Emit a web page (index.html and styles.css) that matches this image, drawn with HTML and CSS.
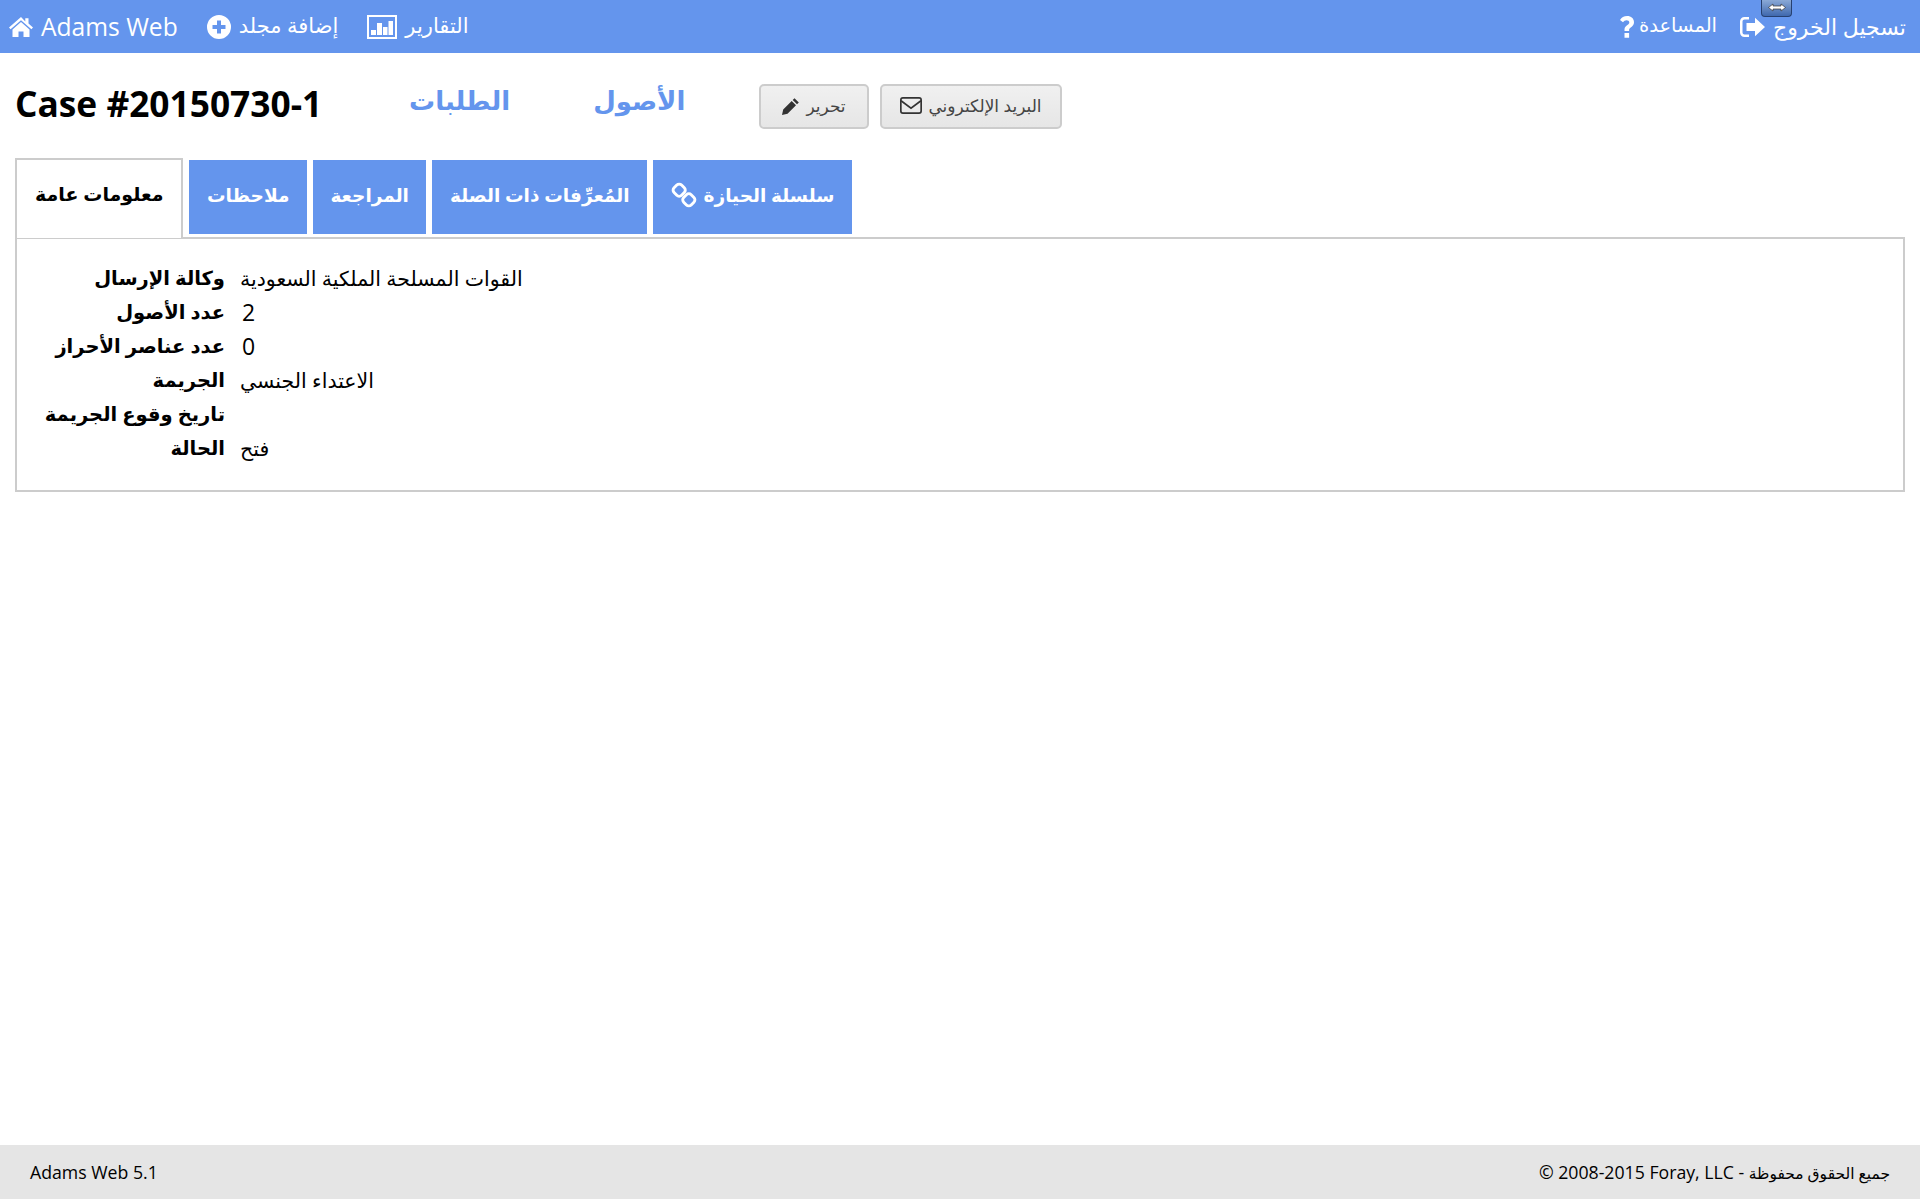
FILE: index.html
```html
<!DOCTYPE html>
<html lang="ar">
<head>
<meta charset="utf-8">
<title>Adams Web</title>
<link rel="stylesheet" href="styles.css">
</head>
<body>
<header class="topbar">
  <nav class="nav-left">
    <a class="nav-item brand"><svg class="ico ico-home" viewBox="0 0 26 22"><path d="M13 1 1 11.500l1.600 1.800L13 4.200l10.400 9.100 1.600-1.800-4.500-3.900V2.200h-3.200v3.200z"/><path d="M13 6 4.500 13.400V21h6v-5.600h5V21h6v-7.600z"/></svg><span>Adams Web</span></a>
    <a class="nav-item"><svg class="ico ico-plus" viewBox="0 0 24 24"><path fill-rule="evenodd" d="M12 0a12 12 0 1 0 0 24 12 12 0 0 0 0-24zM10 5.500h4V10h4.500v4H14v4.500h-4V14H5.500v-4H10z"/></svg><span class="nav-ar" dir="rtl">إضافة مجلد</span></a>
    <a class="nav-item"><svg class="ico ico-chart" viewBox="0 0 30 24"><path fill-rule="evenodd" d="M0 0h30v24H0zM2 2v20h26V2z"/><path d="M4 15h5v5H4zM10 8h5v12h-5zM16 12h4.500v8H16zM21.500 6H26v14h-4.500z"/></svg><span class="nav-ar" dir="rtl">التقارير</span></a>
  </nav>
  <nav class="nav-right">
    <a class="nav-item nav-help"><svg class="ico ico-q" viewBox="0 0 14 22"><path d="M4.500 15h4.600v-1.200c0-1 .5-1.500 1.700-2.400C12.500 10.100 14 8.800 14 6.200 14 2.400 11 0 7.200 0 3.900 0 1.500 1.500 0 4l3 2.300c.9-1.200 2-2 3.600-2 1.500 0 2.700.8 2.700 2.100 0 1.100-.7 1.700-1.900 2.500-1.800 1.200-2.900 2.300-2.900 4.500zM4.500 17h4.600v4.700H4.500z"/></svg><span class="nav-ar" dir="rtl">المساعدة</span></a>
    <a class="nav-item nav-out"><svg class="ico ico-out" viewBox="0 0 25 20"><path d="M9 0H4.500C2 0 0 2 0 4.500v11C0 18 2 20 4.500 20H9v-2.500H4.500c-1.100 0-2-.9-2-2v-11c0-1.100.9-2 2-2H9z"/><path d="M15 .8 25 10 15 19.200V14H6.500V6H15z"/></svg><span class="nav-ar-low" dir="rtl">تسجيل الخروج</span></a>
    <div class="resize-hint"><svg viewBox="0 0 18 8"><path d="M.5 4 5 .5V2.500h8V.5L17.500 4 13 7.500V5.500H5v2z"/></svg></div>
  </nav>
</header>

<main class="content">
  <section class="title-row">
    <h1 class="case-title">Case #20150730-1</h1>
    <div class="section-links">
      <a class="section-link" dir="rtl">الطلبات</a>
      <a class="section-link" dir="rtl">الأصول</a>
    </div>
    <div class="actions">
      <button class="btn btn-edit"><svg class="btn-ico" viewBox="0 0 18 18"><path d="M12.500 1.200 16.800 5.500 15 7.300 10.700 3zM9.700 4 14 8.300 5.500 16.800 0 18l1.200-5.500z"/></svg><span dir="rtl">تحرير</span></button>
      <button class="btn btn-mail"><svg class="btn-ico-mail" viewBox="0 0 21 16"><rect x=".8" y=".8" width="19.400" height="14.400" rx="2" fill="none" stroke="#333" stroke-width="1.600"/><path d="M1 3.500 10.500 10.500 20 3.500" fill="none" stroke="#333" stroke-width="1.600"/></svg><span dir="rtl">البريد الإلكتروني</span></button>
    </div>
  </section>

  <section class="tabs-wrap">
    <ul class="tabs">
      <li class="tab active" dir="rtl">معلومات عامة</li>
      <li class="tab" dir="rtl">ملاحظات</li>
      <li class="tab" dir="rtl">المراجعة</li>
      <li class="tab" dir="rtl">المُعرِّفات ذات الصلة</li>
      <li class="tab"><svg class="ico-link" viewBox="0 0 27 27"><g fill="none" stroke="#fff" stroke-width="3"><rect x="3" y="3" width="11" height="11" rx="3.500" transform="rotate(45 8.500 8.500)"/><rect x="13" y="13" width="11" height="11" rx="3.500" transform="rotate(45 18.500 18.500)"/></g></svg><span dir="rtl">سلسلة الحيازة</span></li>
    </ul>
    <div class="panel">
      <dl class="details">
        <dt dir="rtl">وكالة الإرسال</dt><dd dir="rtl">القوات المسلحة الملكية السعودية</dd>
        <dt dir="rtl">عدد الأصول</dt><dd class="num">2</dd>
        <dt dir="rtl">عدد عناصر الأحراز</dt><dd class="num">0</dd>
        <dt dir="rtl">الجريمة</dt><dd dir="rtl">الاعتداء الجنسي</dd>
        <dt dir="rtl">تاريخ وقوع الجريمة</dt><dd></dd>
        <dt dir="rtl">الحالة</dt><dd dir="rtl">فتح</dd>
      </dl>
    </div>
  </section>
</main>

<footer class="footer">
  <span>Adams Web 5.1</span>
  <span>© 2008-2015 Foray, LLC - <span class="footer-ar" dir="rtl">جميع الحقوق محفوظة</span></span>
</footer>
</body>
</html>
```
FILE: styles.css
```css
* { box-sizing: border-box; }
html, body { height: 100%; }
body {
  margin: 0;
  display: flex;
  flex-direction: column;
  background: #fff;
  color: #000;
  font-family: "Open Sans", "Liberation Sans", "DejaVu Sans", sans-serif;
}
.topbar {
  height: 53px;
  flex: none;
  background: #6495ed;
  color: #fff;
  display: flex;
  justify-content: space-between;
  align-items: center;
  padding: 0 14px 0 8px;
}
.nav-left, .nav-right { display: flex; align-items: center; position: relative; }
.nav-left { gap: 29px; }
.nav-right { gap: 23px; }
.nav-item { display: flex; align-items: center; gap: 8px; font-size: 21px; line-height: 28px; }
.nav-ar { padding-bottom: 4px; }
.nav-ar-low { padding-bottom: 2px; }
.brand { font-size: 24.600px; gap: 7px; }
.nav-help { font-size: 19.500px; gap: 5px; }
.nav-out { font-size: 22px; }
.ico { fill: #fff; flex: none; display: block; }
.ico-home { width: 26px; height: 22px; }
.ico-plus { width: 24px; height: 24px; }
.ico-chart { width: 30px; height: 24px; }
.ico-q { width: 14px; height: 22px; }
.ico-out { width: 25px; height: 20px; }
.resize-hint {
  position: absolute;
  top: -12px;
  right: 114px;
  width: 31px;
  height: 18px;
  border: 1px solid #27406f;
  border-top: 0;
  border-radius: 0 0 4px 4px;
  background: linear-gradient(#8fadd8, #3f68ae);
  display: flex;
  align-items: center;
  justify-content: center;
}
.resize-hint svg { width: 18px; height: 9px; fill: #fff; stroke: #333; stroke-width: .7; }

.content { flex: 1; padding: 0 15px; }
.title-row { display: flex; align-items: center; height: 83px; padding-top: 17px; }
.case-title { margin: 0; font-size: 35.300px; line-height: 40px; font-weight: 700; width: 394px; flex: none; }
.section-links { display: flex; gap: 83px; width: 350px; flex: none; margin-bottom: 6px; }
.section-link { color: #6495ed; font-size: 26px; font-weight: 700; line-height: 40px; }
.actions { display: flex; gap: 11px; margin-top: 7px; }
.btn {
  display: flex;
  align-items: center;
  justify-content: center;
  gap: 6px;
  height: 45px;
  padding: 0 0 2px;
  border: 2px solid #ccc;
  border-radius: 5px;
  background: linear-gradient(#f0f0f0, #e6e6e6);
  color: #444;
  font-family: inherit;
  font-size: 17px;
}
.btn-edit { width: 110px; }
.btn-mail { width: 182px; }
.btn-ico { width: 18px; height: 18px; fill: #333; }
.btn-ico-mail { width: 22px; height: 17px; }

.tabs-wrap { margin-top: 22px; }
.tabs { list-style: none; display: flex; align-items: flex-end; gap: 6px; margin: 0; padding: 0; height: 80px; position: relative; z-index: 1; }
.tab {
  display: flex;
  align-items: center;
  gap: 7px;
  height: 74px;
  margin-bottom: 4px;
  padding: 0 17.500px 5px;
  background: #6495ed;
  color: #fff;
  font-size: 18.500px;
  font-weight: 700;
}
.tab.active {
  height: 80px;
  margin-bottom: 0;
  padding: 0 18px 10px;
  background: #fff;
  color: #000;
  border: 2px solid #ccc;
  border-bottom: 0;
  font-size: 19px;
}
.ico-link { width: 26px; height: 26px; }
.panel {
  margin-top: -1px;
  height: 255px;
  border: 2px solid #ccc;
  padding: 22px 0 0;
}
.details {
  margin: 0;
  display: grid;
  grid-template-columns: 208px 1fr;
  column-gap: 15px;
  grid-auto-rows: 34px;
  font-size: 20.500px;
  line-height: 34px;
}
.details dt { font-weight: 700; text-align: right; font-size: 19.500px; }
.details dd { margin: 0; text-align: left; }
.details .num { font-size: 23px; padding-left: 2px; }
.footer {
  flex: none;
  height: 54px;
  margin-bottom: 1px;
  background: #e5e5e5;
  display: flex;
  justify-content: space-between;
  align-items: center;
  padding: 0 30px;
  font-size: 17.700px;
}
.footer-ar { font-size: 15.500px; }
```
